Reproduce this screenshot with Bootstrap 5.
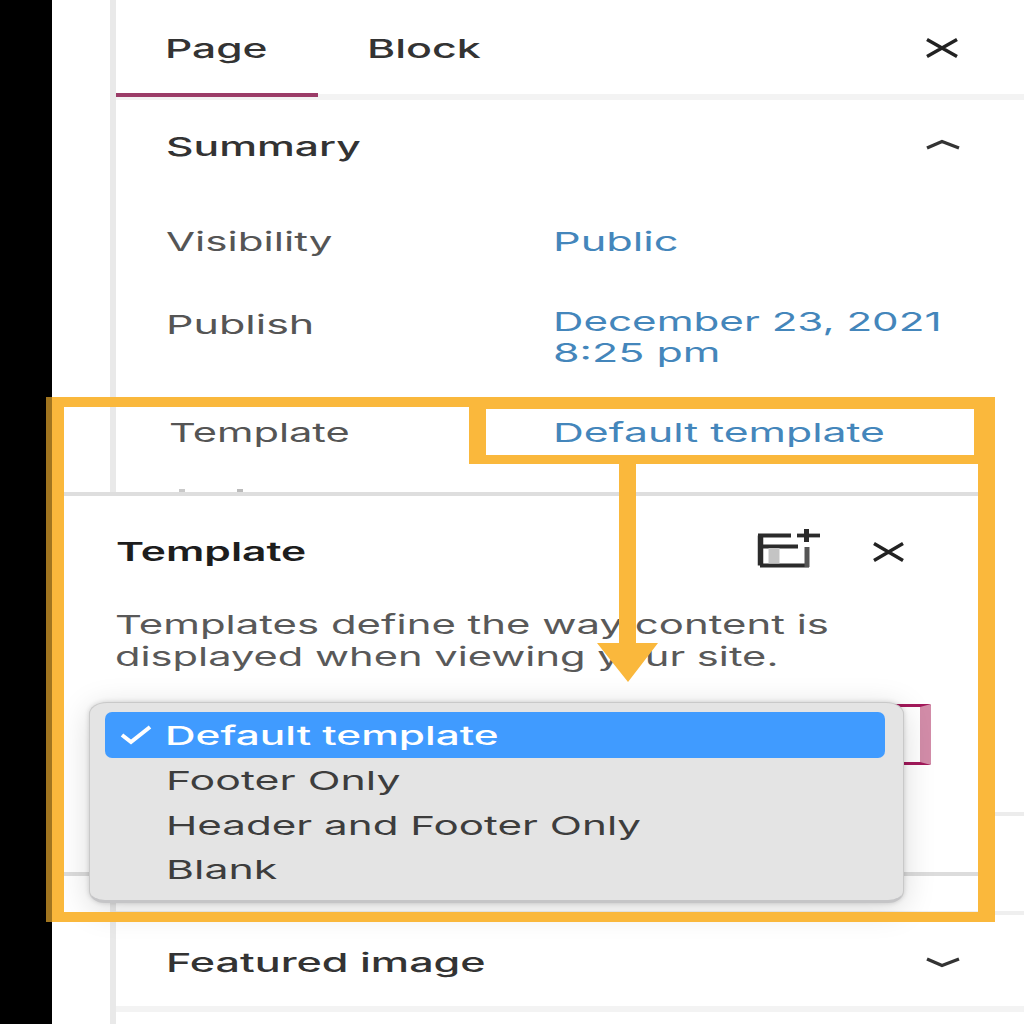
<!DOCTYPE html>
<html lang="en">
<head>
<meta charset="utf-8">
<meta name="viewport" content="width=device-width, initial-scale=1">
<title>Page settings</title>
<link href="https://cdn.jsdelivr.net/npm/bootstrap@5.3.0/dist/css/bootstrap.min.css" rel="stylesheet">
<style>
  body { font-family: Inter, "Liberation Sans", sans-serif; font-size: 26px; line-height: 31px; color: #333; background: #fff; overflow: hidden; }
  .stage { width: 1024px; height: 1024px; }
  .rail { width: 52px; background: #000; }
  .gutter { width: 58px; }
  .panel { border-left: 6px solid #e9e9e9; }
  .wide { display: inline-block; white-space: nowrap; transform-origin: 0 50%; }
  .slot { flex: none; padding-left: 50px; width: 437px; }
  .tabs { height: 100px; border-bottom: 6px solid #f3f3f3; font-weight: 500; }
  .tab-item { width: 202px; height: 97px; padding-left: 49px; color: #333; }
  .tab-item.current { border-bottom: 4px solid #9b3c68; padding-top: 4px; }
  .title-row { height: 93px; font-weight: 500; }
  .title-row > .wide { margin-left: 50px; }
  .end-icon { margin-right: 64px; }
  .tab-close { margin-top: 38px; }
  .meta { color: #555; }
  .meta a { color: #4486bb; text-decoration: none; }
  .r1, .r2, .r3 { height: 96px; }
  .r2 { padding-top: 17px; }
  .r2 .slot { padding-top: 3px; }
  .r3 { padding-bottom: 2px; }
  .r3 .slot { padding-left: 53px; }
  .spacer { height: 430px; }
  .featured { height: 101px; border-top: 4px solid #efefef; border-bottom: 6px solid #f3f3f3; padding-top: 3px; }
  .side-rule { left: 116px; right: 0; top: 812px; height: 4px; background: #ececec; }
  .popover-box { left: 64px; top: 492px; width: 914px; height: 384px; background: #fff; border-top: 4px solid #dedede; border-bottom: 4px solid #dcdcdc; }
  .clip { left: 179px; top: 489px; width: 64px; height: 4px; border-left: 6px solid #c9c9c9; border-right: 6px solid #bbb; }
  .popover-head { height: 111px; padding-left: 52px; padding-right: 72px; font-weight: 600; color: #1d1d1d; }
  .add-icon { margin-bottom: 5px; }
  .popover-close { margin-left: 50px; }
  .desc { padding-left: 51px; padding-top: 2px; color: #595959; }
  .desc > div { height: 32px; }
  .select-edge { left: 860px; top: 704px; width: 71px; height: 61px; border: 3px solid #a3195b; border-right: 11px solid #d28ca8; border-radius: 2px; }
  .choices { left: 89px; top: 702px; width: 815px; height: 201px; padding: 9px 18px 0 15px; background: #e4e4e4; border: 1px solid #c9c9c9; border-bottom: 3px solid #c5c5c7; border-radius: 18px 18px 16px 16px / 12px; box-shadow: 0 6px 32px rgba(0,0,0,.15), 0 0 5px rgba(0,0,0,.16); color: #3d3d3d; }
  .choice { height: 44.7px; padding-left: 61px; }
  .choice.on { height: 46px; background: #409bff; color: #fff; border-radius: 7px; font-weight: 500; padding-left: 15px; }
  .choice.on svg { margin-right: 13px; }
  .marks { left: 0; top: 0; pointer-events: none; }
</style>
</head>
<body>
<div class="stage position-relative d-flex overflow-hidden">
  <div class="rail flex-shrink-0"></div>
  <div class="gutter flex-shrink-0"></div>
  <main class="panel flex-grow-1 d-flex flex-column">
    <nav class="tabs d-flex">
      <div class="tab-item current d-flex align-items-center"><span class="wide" data-w="103">Page</span></div>
      <div class="tab-item d-flex align-items-center"><span class="wide" data-w="114">Block</span></div>
      <svg class="end-icon tab-close ms-auto" width="34" height="20" viewBox="0 0 34 20" fill="none" stroke="#222" stroke-width="3.4"><path d="M1 1.500 31 18.500M31 1.500 1 18.500"/></svg>
    </nav>
    <section class="title-row d-flex align-items-center">
      <span class="wide" data-w="195">Summary</span>
      <svg class="end-icon ms-auto mb-1" width="34" height="14" viewBox="0 0 34 14" fill="none" stroke="#333" stroke-width="3.4"><path d="M1 10 16 3.500 33 10"/></svg>
    </section>
    <section class="meta">
      <div class="r1 d-flex align-items-center"><div class="slot"><span class="wide" data-w="167">Visibility</span></div><a href="#" class="wide" data-w="125">Public</a></div>
      <div class="r2 d-flex"><div class="slot"><span class="wide" data-w="149">Publish</span></div><a href="#"><span class="wide" data-w="389">December 23, 2021</span><br><span class="wide" data-w="167">8:25 pm</span></a></div>
      <div class="r3 d-flex align-items-center"><div class="slot"><span class="wide" data-w="181">Template</span></div><a href="#" class="wide" data-w="332">Default template</a></div>
    </section>
    <div class="spacer flex-shrink-0"></div>
    <section class="featured title-row d-flex align-items-center">
      <span class="wide" data-w="320">Featured image</span>
      <svg class="end-icon ms-auto" width="34" height="14" viewBox="0 0 34 14" fill="none" stroke="#333" stroke-width="3.4"><path d="M1 4 16 10.500 33 4"/></svg>
    </section>
  </main>

  <div class="side-rule position-absolute"></div>
  <div class="clip position-absolute"></div>
  <div class="popover-box position-absolute">
    <div class="popover-head d-flex align-items-center">
      <span class="wide" data-w="190">Template</span>
      <svg class="add-icon ms-auto" width="66" height="42" viewBox="0 0 66 42" fill="none" stroke="#2b2b2b"><path stroke-width="5.500" d="M4.500 7.500V37.500"/><path stroke-width="3.800" d="M2 7.500H35M4 37.500H53M5 18.500H42"/><path stroke="#c4c4c4" stroke-width="11" d="M18 20V35.500"/><path stroke="#555" stroke-width="5" d="M51 19V39"/><path stroke-width="5" d="M50.500 1V14"/><path stroke-width="3.800" d="M41 7.500H64"/></svg>
      <svg class="popover-close" width="34" height="20" viewBox="0 0 34 20" fill="none" stroke="#222" stroke-width="3.4"><path d="M2 1.500 31 18.500M31 1.500 2 18.500"/></svg>
    </div>
    <div class="desc">
      <div><span class="wide" data-w="714">Templates define the way content is</span></div>
      <div><span class="wide" data-w="663">displayed when viewing your site.</span></div>
    </div>
  </div>
  <div class="select-edge position-absolute"></div>
  <div class="choices position-absolute">
    <div class="choice on d-flex align-items-center"><svg width="32" height="22" viewBox="0 0 32 22" fill="none" stroke="#fff" stroke-width="4"><path d="M2 11 11 18 30 3"/></svg><span class="wide" data-w="334">Default template</span></div>
    <div class="choice d-flex align-items-center"><span class="wide" data-w="234">Footer Only</span></div>
    <div class="choice d-flex align-items-center"><span class="wide" data-w="475">Header and Footer Only</span></div>
    <div class="choice d-flex align-items-center"><span class="wide" data-w="112">Blank</span></div>
  </div>

  <!-- callout frame and arrow -->
  <svg class="marks position-absolute" width="1024" height="1024" viewBox="0 0 1024 1024">
    <path fill="#fab83c" fill-rule="evenodd" d="M52 397H995V922H52ZM64 407V912H978V464H469V407ZM486 409V455H974V409Z"/>
    <path fill="#a1751f" d="M46 397h6v525h-6z"/>
    <path fill="#fab83c" d="M619 460H636V643H658L628 682 597 643H619Z"/>
  </svg>
</div>
<script src="https://cdn.jsdelivr.net/npm/bootstrap@5.3.0/dist/js/bootstrap.bundle.min.js"></script>
<script>
  // Stretch each label to its extended width
  document.querySelectorAll('.wide').forEach(function (el) {
    el.style.transform = 'scaleX(' + (el.dataset.w / el.offsetWidth) + ')';
  });
</script>
</body>
</html>
